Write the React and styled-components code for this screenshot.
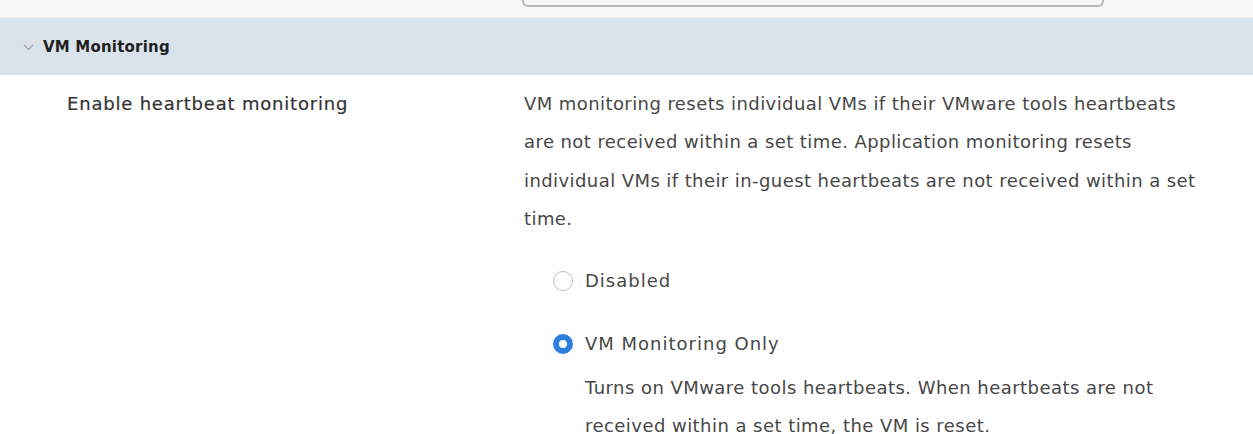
import React from 'react';
import styled, { createGlobalStyle } from 'styled-components';

const GlobalStyle = createGlobalStyle`
  body {
    margin: 0;
    background: #ffffff;
    font-family: 'DejaVu Sans', 'Liberation Sans', sans-serif;
    color: #333333;
  }
`;

const Page = styled.div`
  width: 1253px;
  height: 434px;
  overflow: hidden;
  background: #ffffff;
`;

const TopStrip = styled.div`
  height: 17px;
  background: #f8f8f8;
  border-bottom: 1px solid #eeeeee;
  padding-left: 522px;
`;

const InputEdge = styled.div`
  width: 578px;
  height: 5px;
  border: 2px solid #b9b9b9;
  border-top: none;
  border-radius: 0 0 6px 6px;
`;

const SectionHeader = styled.div`
  display: flex;
  align-items: center;
  gap: 9px;
  height: 57px;
  padding-left: 23px;
  background: #dae3ea;
  font-size: 15px;
  font-weight: 700;
  letter-spacing: 0.2px;
  color: #1f1f1f;
`;

const Chevron = styled.svg`
  width: 11px;
  height: 7px;
  margin-top: 2px;
`;

const Row = styled.div`
  display: grid;
  grid-template-columns: 457px 1fr;
  padding-left: 67px;
  padding-top: 10px;
`;

const Label = styled.div`
  font-size: 18px;
  line-height: 38px;
  letter-spacing: 0.8px;
  color: #333333;
  -webkit-text-stroke: 0.2px #333333;
`;

const Description = styled.p`
  margin: 0;
  width: 686px;
  font-size: 18px;
  line-height: 38.4px;
  letter-spacing: 0.42px;
  color: #474747;
`;

const Options = styled.div`
  display: flex;
  flex-direction: column;
  gap: 25px;
  padding: 23px 0 0 29px;
`;

const Option = styled.label`
  display: grid;
  grid-template-columns: 20px 1fr;
  column-gap: 12px;
  align-items: center;
  font-size: 18px;
  letter-spacing: 1px;
  color: #474747;
`;

const Radio = styled.span`
  width: 20px;
  height: 20px;
  box-sizing: border-box;
  border-radius: 50%;
  border: ${({ checked }) => (checked ? '6px solid #2f7de1' : '1.5px solid #bdbdbd')};
  background: #ffffff;
`;

const OptionText = styled.span`
  line-height: 38px;
`;

const OptionHelp = styled.p`
  grid-column: 2;
  margin: 6px 0 0;
  font-size: 18px;
  line-height: 38.6px;
  letter-spacing: 0.45px;
  color: #474747;
  max-width: 640px;
`;

export default function App() {
  return (
    <Page>
      <GlobalStyle />
      <TopStrip>
        <InputEdge />
      </TopStrip>
      <SectionHeader>
        <Chevron viewBox="0 0 11 7">
          <path d="M1 1 L5.5 5.5 L10 1" fill="none" stroke="#9aa3ab" strokeWidth="1.2" />
        </Chevron>
        VM Monitoring
      </SectionHeader>
      <Row>
        <Label>Enable heartbeat monitoring</Label>
        <div>
          <Description>
            VM monitoring resets individual VMs if their VMware tools heartbeats are not received
            within a set time. Application monitoring resets individual VMs if their in-guest
            heartbeats are not received within a set time.
          </Description>
          <Options>
            <Option>
              <Radio />
              <OptionText>Disabled</OptionText>
            </Option>
            <Option>
              <Radio checked />
              <OptionText>VM Monitoring Only</OptionText>
              <OptionHelp>
                Turns on VMware tools heartbeats. When heartbeats are not received within a set
                time, the VM is reset.
              </OptionHelp>
            </Option>
          </Options>
        </div>
      </Row>
    </Page>
  );
}
